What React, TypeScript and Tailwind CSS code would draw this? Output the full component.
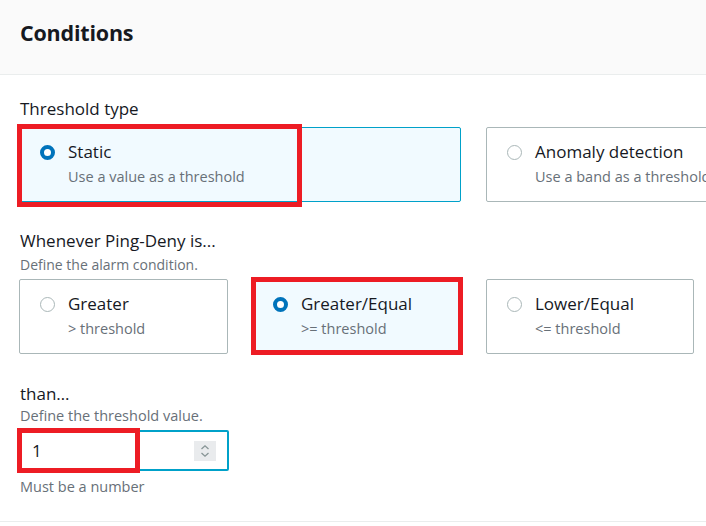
import React from 'react';

type Option = { title: string; desc: string };

function Radio({ checked }: { checked: boolean }) {
  return checked ? (
    <span className="mt-[4px] block h-[15px] w-[15px] shrink-0 rounded-full border-[4px] border-[#0073bb] bg-white" />
  ) : (
    <span className="mt-[4px] block h-[15px] w-[15px] shrink-0 rounded-full border-[1.5px] border-[#aab7b8] bg-white" />
  );
}

function Card({
  opt,
  selected,
  highlight,
  className = '',
}: {
  opt: Option;
  selected?: boolean;
  highlight?: 'static' | 'tight';
  className?: string;
}) {
  return (
    <div
      className={`relative flex h-[75px] gap-[13px] rounded-[2px] border pl-[20px] pt-[13px] ${
        selected ? 'border-[#00a1c9] bg-[#f1faff]' : 'border-[#aab7b8] bg-white'
      } ${className}`}
    >
      <Radio checked={!!selected} />
      <div className="flex flex-col">
        <span className="whitespace-nowrap text-[17px] leading-[22px] text-[#16191f]">{opt.title}</span>
        <span className="mt-[3px] whitespace-nowrap text-[14.5px] leading-[21px] text-[#687078]">{opt.desc}</span>
      </div>
      {highlight === 'static' && (
        <div className="pointer-events-none absolute left-[-3px] top-[-4px] h-[83px] w-[285px] border-[5px] border-[#ed1c24]" />
      )}
      {highlight === 'tight' && (
        <div className="pointer-events-none absolute left-[-2px] top-[-3px] h-[78px] w-[212px] border-[5px] border-[#ed1c24]" />
      )}
    </div>
  );
}

export default function App() {
  return (
    <div
      className="h-[526px] w-[706px] overflow-hidden bg-white text-[#16191f]"
      style={{ fontFamily: '"Open Sans", "Noto Sans", sans-serif' }}
    >
      {/* Header */}
      <div className="flex h-[75px] items-start border-b border-[#eaeded] bg-[#fafafa] px-[20px] pt-[18px]">
        <h2 className="text-[21.5px] font-bold leading-[30px] tracking-[-0.2px]">Conditions</h2>
      </div>

      <div className="px-[19px] pt-[23px]">
        {/* Threshold type */}
        <div className="pl-[1px] text-[17px] leading-[22px]">Threshold type</div>
        <div className="mt-[7px] grid w-[900px] grid-cols-[209px_209px_209px_209px] gap-x-[24px]">
          <Card
            className="col-span-2"
            opt={{ title: 'Static', desc: 'Use a value as a threshold' }}
            selected
            highlight="static"
          />
          <Card
            className="col-span-2 ml-[1px]"
            opt={{ title: 'Anomaly detection', desc: 'Use a band as a threshold' }}
          />
        </div>

        {/* Whenever */}
        <div className="mt-[28px] pl-[1px] text-[17px] leading-[22px]">Whenever Ping-Deny is...</div>
        <div className="mt-[3px] pl-[1px] text-[14px] leading-[20px] text-[#687078]">Define the alarm condition.</div>
        <div className="mt-[4px] grid w-[900px] grid-cols-[209px_209px_209px] gap-x-[24px]">
          <Card opt={{ title: 'Greater', desc: '> threshold' }} />
          <Card opt={{ title: 'Greater/Equal', desc: '>= threshold' }} selected highlight="tight" />
          <Card className="ml-[1px] w-[208px]" opt={{ title: 'Lower/Equal', desc: '<= threshold' }} />
        </div>

        {/* than */}
        <div className="mt-[28px] pl-[1px] text-[17px] leading-[24px]">than…</div>
        <div className="pl-[1px] text-[14.5px] leading-[20px] text-[#687078]">Define the threshold value.</div>
        <div className="relative mt-[4px] flex h-[41px] w-[210px] items-center rounded-[2px] border-2 border-[#00a1c9] pl-[11px] pr-[11px]">
          <span className="flex-1 text-[17px] leading-[22px]">1</span>
          <span className="flex h-[20px] w-[22px] flex-col items-center justify-center bg-[#e9ebed]">
            <svg width="10" height="14" viewBox="0 0 10 14" fill="none" stroke="#879596" strokeWidth="1.3">
              <path d="M1.5 5 L5 1.8 L8.5 5" />
              <path d="M1.5 9 L5 12.2 L8.5 9" />
            </svg>
          </span>
          <div className="pointer-events-none absolute left-[-4px] top-[-4px] h-[45px] w-[123px] border-[5px] border-[#ed1c24]" />
        </div>
        <div className="mt-[6px] pl-[1px] text-[14.5px] leading-[20px] text-[#687078]">Must be a number</div>
      </div>
      <div className="mt-[24px] border-b border-[#eaeded]" />
    </div>
  );
}
